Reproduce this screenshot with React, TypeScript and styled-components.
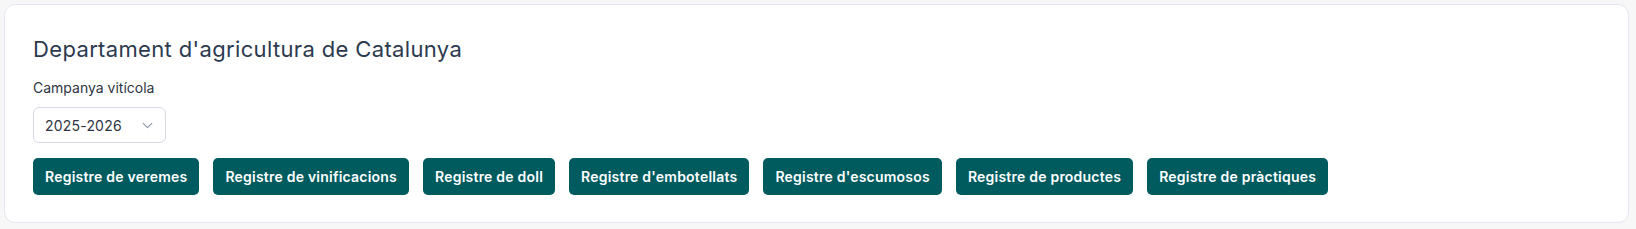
import React from 'react';
import styled, { createGlobalStyle } from 'styled-components';

const GlobalStyle = createGlobalStyle`
  html, body {
    margin: 0;
    padding: 0;
    background: #f7f7f8;
  }

  body {
    font-family: Inter, 'Noto Sans', sans-serif;
    color: #2d3748;
  }
`;

const Page = styled.div`
  padding: 4px 7px 5px 4px;
`;

const Card = styled.section`
  background: #ffffff;
  border: 1px solid #e3e7ef;
  border-radius: 11px;
  padding: 30px 28px 27px 28px;
  display: flex;
  flex-direction: column;
  align-items: flex-start;
`;

const Title = styled.h2`
  margin: 0 0 16px;
  font-size: 22px;
  font-weight: 400;
  letter-spacing: 0.35px;
  line-height: 28px;
  color: #2c3a4f;
`;

const Label = styled.label`
  font-size: 14px;
  line-height: 18px;
  color: #2f3542;
  margin-bottom: 10px;
`;

const SelectBox = styled.div`
  width: 133px;
  height: 36px;
  box-sizing: border-box;
  border: 1px solid #d5dae3;
  border-radius: 6px;
  display: flex;
  align-items: center;
  justify-content: space-between;
  padding: 0 11px 0 11px;
  font-size: 14px;
  letter-spacing: 0.2px;
  color: #2f3542;
  margin-bottom: 15px;
`;

const Chevron = styled.svg`
  width: 13px;
  height: 13px;
  color: #8a94a6;
`;

const ButtonRow = styled.div`
  display: flex;
  gap: 14px;
`;

const ActionButton = styled.button`
  height: 37px;
  padding: 0 12px;
  border: none;
  border-radius: 5px;
  background: #005b5f;
  color: #ffffff;
  font-family: Inter, 'Noto Sans', sans-serif;
  font-size: 14px;
  font-weight: 600;
  letter-spacing: 0.22px;
  cursor: pointer;
`;

const registres = [
  'Registre de veremes',
  'Registre de vinificacions',
  'Registre de doll',
  "Registre d'embotellats",
  "Registre d'escumosos",
  'Registre de productes',
  'Registre de pràctiques',
];

export default function App() {
  return (
    <>
      <GlobalStyle />
      <Page>
        <Card>
          <Title>Departament d'agricultura de Catalunya</Title>
          <Label>Campanya vitícola</Label>
          <SelectBox>
            <span>2025-2026</span>
            <Chevron viewBox="0 0 24 24" fill="none" stroke="currentColor" strokeWidth="2" strokeLinecap="round" strokeLinejoin="round">
              <path d="M4 8l8 8 8-8" />
            </Chevron>
          </SelectBox>
          <ButtonRow>
            {registres.map((r) => (
              <ActionButton key={r}>{r}</ActionButton>
            ))}
          </ButtonRow>
        </Card>
      </Page>
    </>
  );
}
